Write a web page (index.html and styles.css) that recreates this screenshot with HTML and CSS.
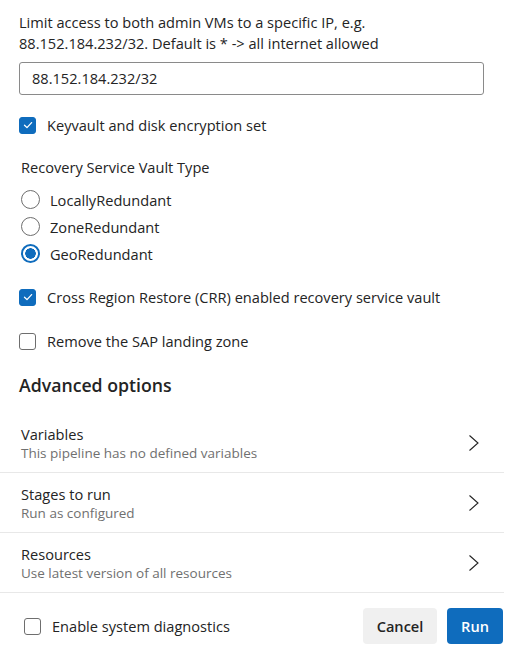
FILE: index.html
```html
<!DOCTYPE html>
<html lang="en">
<head>
<meta charset="utf-8">
<title>Run pipeline</title>
<link rel="stylesheet" href="styles.css">
</head>
<body>
<div class="panel">
  <div class="form">
    <p class="desc">Limit access to both admin VMs to a specific IP, e.g.<br>88.152.184.232/32. Default is * -&gt; all internet allowed</p>
    <div class="input">88.152.184.232/32</div>

    <label class="check row-kv">
      <span class="box checked"><svg viewBox="0 0 12 12" width="12" height="12"><path d="M2.5 6.2 L5 8.6 L9.6 3.6" fill="none" stroke="#fff" stroke-width="1.3" stroke-linecap="round" stroke-linejoin="round"/></svg></span>
      <span>Keyvault and disk encryption set</span>
    </label>

    <div class="group-label">Recovery Service Vault Type</div>
    <div class="radios">
      <label class="radio"><span class="circle"></span><span>LocallyRedundant</span></label>
      <label class="radio"><span class="circle"></span><span>ZoneRedundant</span></label>
      <label class="radio"><span class="circle on"></span><span>GeoRedundant</span></label>
    </div>

    <label class="check row-crr">
      <span class="box checked"><svg viewBox="0 0 12 12" width="12" height="12"><path d="M2.5 6.2 L5 8.6 L9.6 3.6" fill="none" stroke="#fff" stroke-width="1.3" stroke-linecap="round" stroke-linejoin="round"/></svg></span>
      <span>Cross Region Restore (CRR) enabled recovery service vault</span>
    </label>

    <label class="check row-sap">
      <span class="box"></span>
      <span>Remove the SAP landing zone</span>
    </label>

    <h2 class="heading">Advanced options</h2>
  </div>

  <div class="list">
    <div class="item">
      <div class="texts"><div class="title">Variables</div><div class="sub">This pipeline has no defined variables</div></div>
      <svg class="chev" viewBox="0 0 12 18" width="12" height="18"><path d="M1.5 1.5 L10 9 L1.5 16.5" fill="none" stroke="#222" stroke-width="1.1"/></svg>
    </div>
    <div class="item">
      <div class="texts"><div class="title">Stages to run</div><div class="sub">Run as configured</div></div>
      <svg class="chev" viewBox="0 0 12 18" width="12" height="18"><path d="M1.5 1.5 L10 9 L1.5 16.5" fill="none" stroke="#222" stroke-width="1.1"/></svg>
    </div>
    <div class="item">
      <div class="texts"><div class="title">Resources</div><div class="sub">Use latest version of all resources</div></div>
      <svg class="chev" viewBox="0 0 12 18" width="12" height="18"><path d="M1.5 1.5 L10 9 L1.5 16.5" fill="none" stroke="#222" stroke-width="1.1"/></svg>
    </div>
  </div>

  <div class="footer">
    <label class="check diag">
      <span class="box"></span>
      <span>Enable system diagnostics</span>
    </label>
    <div class="buttons">
      <button class="btn cancel">Cancel</button>
      <button class="btn run">Run</button>
    </div>
  </div>
</div>
</body>
</html>
```
FILE: styles.css
```css
* { box-sizing: border-box; }
html, body { margin: 0; padding: 0; background: #fff; }
body {
  font-family: "Open Sans", "Noto Sans", sans-serif;
  font-size: 14.6px;
  color: #242424;
}
.panel { width: 509px; }
.form { padding: 12px 25px 0 19px; }
.desc { margin: 0; line-height: 21px; }
.input {
  margin-top: 8px;
  height: 33px;
  border: 1px solid #8a8a8a;
  border-radius: 3px;
  padding: 0 12px;
  line-height: 31px;
}
.check { display: flex; align-items: center; gap: 11px; height: 20px; }
.box {
  width: 17px; height: 17px;
  border: 1px solid #6e6e6e;
  border-radius: 3px;
  display: flex; align-items: center; justify-content: center;
  flex: none;
  background: #fff;
}
.box.checked { background: #0f6cbd; border-color: #0f6cbd; }
.row-kv { margin-top: 20px; }
.group-label { margin-top: 22px; line-height: 20px; padding-left: 2px; }
.radios { margin-top: 9px; }
.radio { display: flex; align-items: center; gap: 10px; height: 27px; padding-left: 2px; }
.circle {
  width: 19px; height: 19px; border-radius: 50%;
  border: 1px solid #6e6e6e; flex: none; background: #fff;
}
.circle.on {
  border: 2px solid #0f6cbd;
  background: radial-gradient(circle, #0f6cbd 0 5px, #fff 5.5px);
}
.row-crr { margin-top: 20px; }
.row-sap { margin-top: 24px; }
.heading {
  margin: 22px 0 0;
  font-size: 17.7px;
  font-weight: 600;
  line-height: 24px;
}
.list { margin-top: 16px; width: 504px; }
.item {
  display: flex; align-items: center; justify-content: space-between;
  height: 60px;
  padding: 0 24px 0 21px;
  border-bottom: 1px solid #e8e8e8;
}
.texts { padding-top: 1px; }
.title { line-height: 20px; }
.sub { line-height: 18px; font-size: 13.5px; color: #707070; }
.chev { flex: none; }
.footer {
  display: flex; align-items: center; justify-content: space-between;
  padding: 15px 6px 0 24px;
}
.buttons { display: flex; gap: 10px; }
.btn {
  height: 36px; border: none; border-radius: 4px;
  font-family: inherit; font-size: 14.6px; font-weight: 600;
  padding: 0;
}
.cancel { background: #f0f0f0; color: #242424; width: 74px; }
.run { background: #0f6cbd; color: #fff; width: 56px; }
```
